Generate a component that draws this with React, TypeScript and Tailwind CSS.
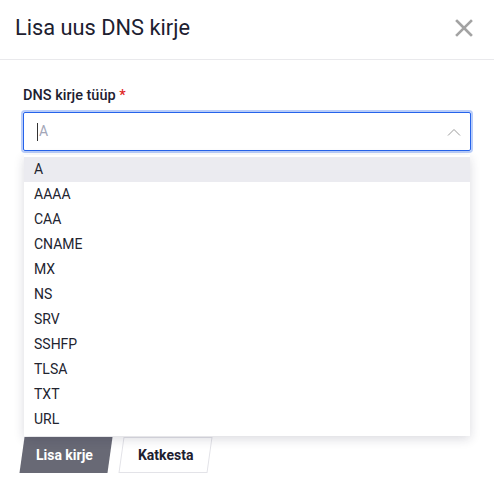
import { useState } from 'react';

const types = ['A', 'AAAA', 'CAA', 'CNAME', 'MX', 'NS', 'SRV', 'SSHFP', 'TLSA', 'TXT', 'URL'];

export default function App() {
  const [active] = useState('A');

  return (
    <div className="w-[494px] h-[492px] bg-white text-[#1f2130]" style={{ fontFamily: 'Roboto, "Liberation Sans", sans-serif' }}>
      {/* Header */}
      <div className="flex items-center justify-between h-[60px] pl-[15px] pr-[20px] border-b border-[#e9e9ec]">
        <h2 className="text-[21.8px] leading-none text-[#1d2030] -mt-[3px]">Lisa uus DNS kirje</h2>
        <button className="text-[#a3a3a3] -mt-[3px]">
          <svg width="20" height="20" viewBox="0 0 20 20" fill="none" stroke="currentColor" strokeWidth="2.6" strokeLinecap="square">
            <path d="M3 3L17 17M17 3L3 17" />
          </svg>
        </button>
      </div>

      {/* Body */}
      <div className="px-[23px] pt-[26px]">
        <label className="block text-[14.5px] font-medium leading-5 text-[#1d2030] mb-[6px]">
          DNS kirje tüüp <span className="text-[#e02424]">*</span>
        </label>
        <div className="relative">
          <div className="flex items-center h-[39px] rounded-[2px] border border-[#2563eb] ring-[2px] ring-[#9bb8f7]/70 pl-[13px] pr-[9px]">
            <span className="w-px h-[18px] bg-[#333] mr-[1px]" />
            <span className="flex-1 text-[14px] text-[#a3a6b8]">A</span>
            <svg width="14" height="8" viewBox="0 0 14 8" fill="none" stroke="#9a9a9a" strokeWidth="1">
              <path d="M1 7.5L7 1.5L13 7.5" />
            </svg>
          </div>

          {/* Dropdown */}
          <div className="absolute left-[1px] right-[1px] top-[43px] z-10 bg-white pt-[2px] pb-[4px] shadow-[0_3px_10px_rgba(30,30,60,0.16)]">
            {types.map((t) => (
              <div
                key={t}
                className={`h-[25px] flex items-center pl-[10px] text-[14px] text-[#22242f] ${t === active ? 'bg-[#ebebf0]' : ''}`}
              >
                {t}
              </div>
            ))}
          </div>
        </div>

        {/* Buttons */}
        <div className="flex gap-[11px] mt-[286px] -ml-[1px]">
          <button className="h-[36px] w-[88px] -skew-x-[8deg] bg-[#686975] text-white text-[14px] font-bold">
            <span className="inline-block skew-x-[8deg] -ml-[3px]">Lisa kirje</span>
          </button>
          <button className="h-[36px] w-[89px] -skew-x-[8deg] bg-white border border-[#e3e3e8] text-[#1d2030] text-[14px] font-bold">
            <span className="inline-block skew-x-[8deg]">Katkesta</span>
          </button>
        </div>
      </div>
    </div>
  );
}
